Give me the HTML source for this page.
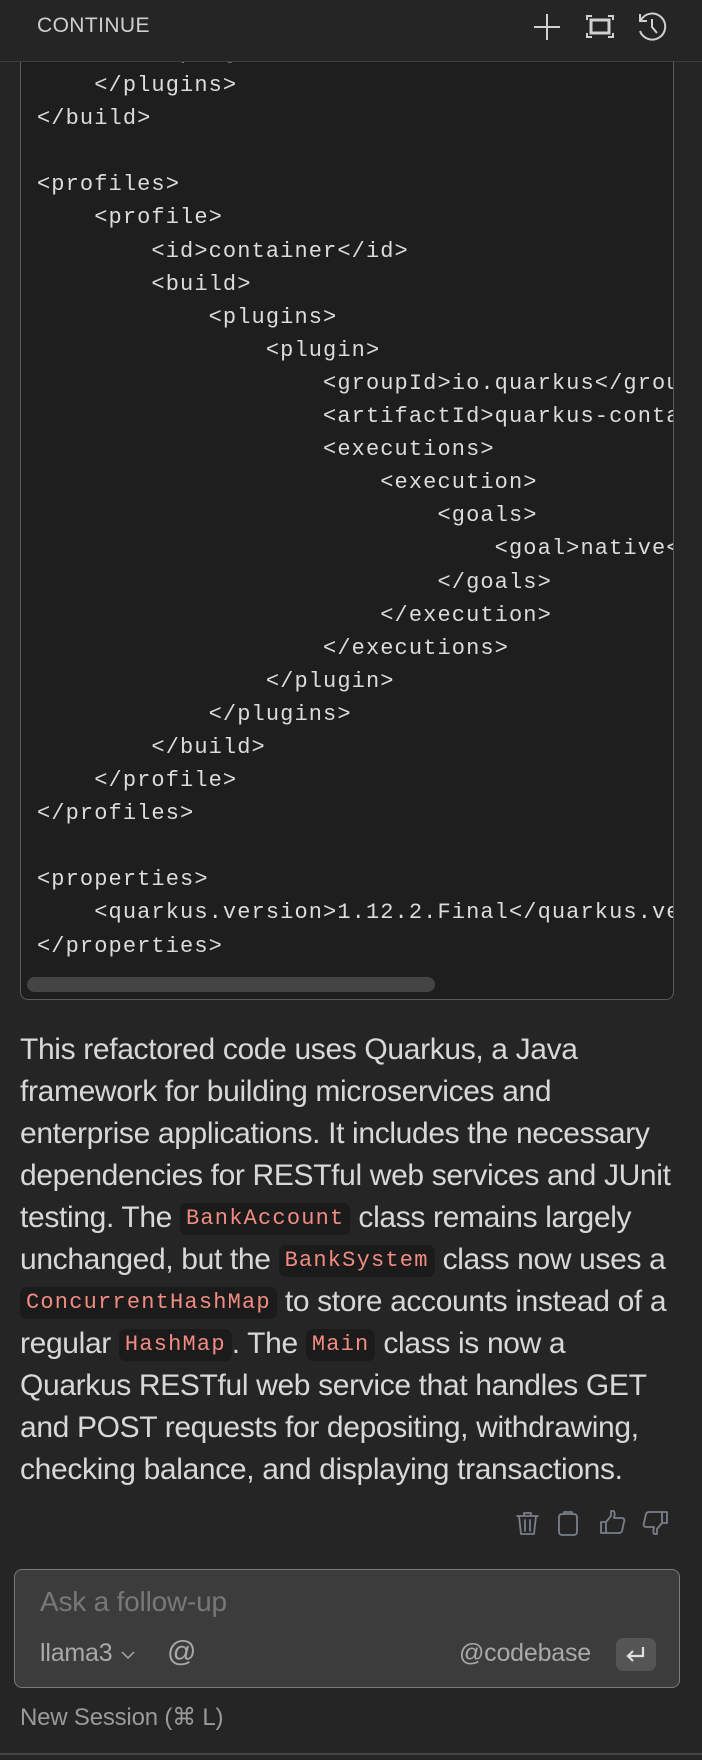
<!DOCTYPE html>
<html><head><meta charset="utf-8"><style>
*{margin:0;padding:0;box-sizing:border-box}
html,body{width:702px;height:1760px;background:#252525;overflow:hidden;position:relative;font-family:"Liberation Sans",sans-serif}
.hdr{position:absolute;left:0;top:0;width:702px;height:62px;background:#252525;border-bottom:1px solid #3c3c3c;z-index:5}
.hdr .t{position:absolute;left:37px;top:14px;font-size:21px;color:#cfcfcf;letter-spacing:0.4px}
.code{position:absolute;left:20px;top:20px;width:654px;height:980px;border:1px solid #5a5a5a;border-radius:8px;background:#1e1e1e;overflow:hidden}
.code pre{position:absolute;left:16px;top:15px;font-family:"Liberation Mono",monospace;font-size:22px;letter-spacing:1.1px;line-height:33.1px;color:#dcdcdc;white-space:pre}
.sb{position:absolute;left:6px;bottom:7px;width:408px;height:15px;border-radius:8px;background:#444}
.para{position:absolute;left:20px;top:1029px;font-size:30px;color:#d8d8d8;white-space:nowrap;letter-spacing:-0.35px}
.l{display:block;height:42px;line-height:42px}
.ic{font-family:"Liberation Mono",monospace;font-size:22px;letter-spacing:1.2px;color:#f28b82;background:#1b1b1b;border-radius:7px;padding:3px 6px;line-height:26px;display:inline-block;vertical-align:3px}
.inp{position:absolute;left:14px;top:1569px;width:666px;height:119px;background:#3c3c3c;border:1px solid #7a7a7a;border-radius:8px}
.ph{position:absolute;left:25px;top:16px;font-size:28px;color:#787878;letter-spacing:-0.2px}
.row{position:absolute;font-size:25px;color:#a9a9a9;letter-spacing:-0.2px}
.enter{position:absolute;left:601px;top:68px;width:40px;height:33px;border-radius:7px;background:#555}
.ns{position:absolute;left:20px;top:1703px;font-size:24px;color:#9a9a9a;letter-spacing:-0.2px}
</style></head><body>
<div class="hdr"><div class="t">CONTINUE</div>
<svg style="position:absolute;left:530px;top:10px" width="140" height="36" viewBox="530 10 140 36" fill="none" stroke="#d0d0d0" stroke-width="2">
<path d="M547 14v26M534 27h26"/>
<path d="M587 20v-4h5M608 16h5v4M613 33v4h-5M592 37h-5v-4"/>
<rect x="591" y="20" width="18" height="13" stroke-width="3"/>
<path d="M641 20a13 13 0 1 1 -1 11"/><path d="M640 14v7h7"/><path d="M652 19v8l5 6"/>
</svg></div>
<div class="code"><pre>        &lt;/plugin&gt;
    &lt;/plugins&gt;
&lt;/build&gt;

&lt;profiles&gt;
    &lt;profile&gt;
        &lt;id&gt;container&lt;/id&gt;
        &lt;build&gt;
            &lt;plugins&gt;
                &lt;plugin&gt;
                    &lt;groupId&gt;io.quarkus&lt;/groupId&gt;
                    &lt;artifactId&gt;quarkus-container&lt;/artifactId&gt;
                    &lt;executions&gt;
                        &lt;execution&gt;
                            &lt;goals&gt;
                                &lt;goal&gt;native&lt;/goal&gt;
                            &lt;/goals&gt;
                        &lt;/execution&gt;
                    &lt;/executions&gt;
                &lt;/plugin&gt;
            &lt;/plugins&gt;
        &lt;/build&gt;
    &lt;/profile&gt;
&lt;/profiles&gt;

&lt;properties&gt;
    &lt;quarkus.version&gt;1.12.2.Final&lt;/quarkus.version&gt;
&lt;/properties&gt;</pre><div class="sb"></div></div>
<div class="para"><span class="l">This refactored code uses Quarkus, a Java</span><span class="l">framework for building microservices and</span><span class="l">enterprise applications. It includes the necessary</span><span class="l">dependencies for RESTful web services and JUnit</span><span class="l">testing. The <span class="ic">BankAccount</span> class remains largely</span><span class="l">unchanged, but the <span class="ic">BankSystem</span> class now uses a</span><span class="l"><span class="ic">ConcurrentHashMap</span> to store accounts instead of a</span><span class="l">regular <span class="ic">HashMap</span>. The <span class="ic">Main</span> class is now a</span><span class="l">Quarkus RESTful web service that handles GET</span><span class="l">and POST requests for depositing, withdrawing,</span><span class="l">checking balance, and displaying transactions.</span></div>
<svg style="position:absolute;left:510px;top:1508px" width="170" height="32" viewBox="510 1508 170 32" fill="none" stroke="#7a7f88" stroke-width="1.8" stroke-linejoin="round" stroke-linecap="round">
<path d="M517 1516h21M524 1516v-3h7v3M519 1516l2 18h13l2-18M525 1520v11M530 1520v11"/>
<rect x="559" y="1514" width="18" height="21" rx="3"/><path d="M564 1514v-2h8v2"/>
<path d="M601 1522h5v11h-5zM606 1522l5-6v-5h2c2 0 2 3 1 7h8c2 0 3 2 2 4l-2 9c-1 2-2 2-4 2h-12"/>
<path d="M667 1523h-5v-11h5zM662 1523l-5 6v5h-2c-2 0-2-3-1-7h-8c-2 0-3-2-2-4l2-9c1-2 2-2 4-2h12"/>
</svg>
<div class="inp"><div class="ph">Ask a follow-up</div>
<div class="row" style="left:25px;top:69px">llama3</div>
<svg style="position:absolute;left:106px;top:80px" width="14" height="10" viewBox="0 0 14 10" fill="none" stroke="#a9a9a9" stroke-width="1.5"><path d="M1 2l6 6 6-6"/></svg>
<div class="row" style="left:152px;top:66px;font-size:29px">@</div>
<div class="row" style="left:444px;top:69px">@codebase</div>
<div class="enter"><svg width="40" height="33" viewBox="0 0 40 33" fill="none" stroke="#e0e0e0" stroke-width="2.2"><path d="M27 9v9H13M17 13l-5 5 5 5"/></svg></div>
</div>
<div class="ns">New Session (⌘ L)</div>
<div style="position:absolute;left:0;top:1753px;width:702px;height:2px;background:#444"></div>
</body></html>
